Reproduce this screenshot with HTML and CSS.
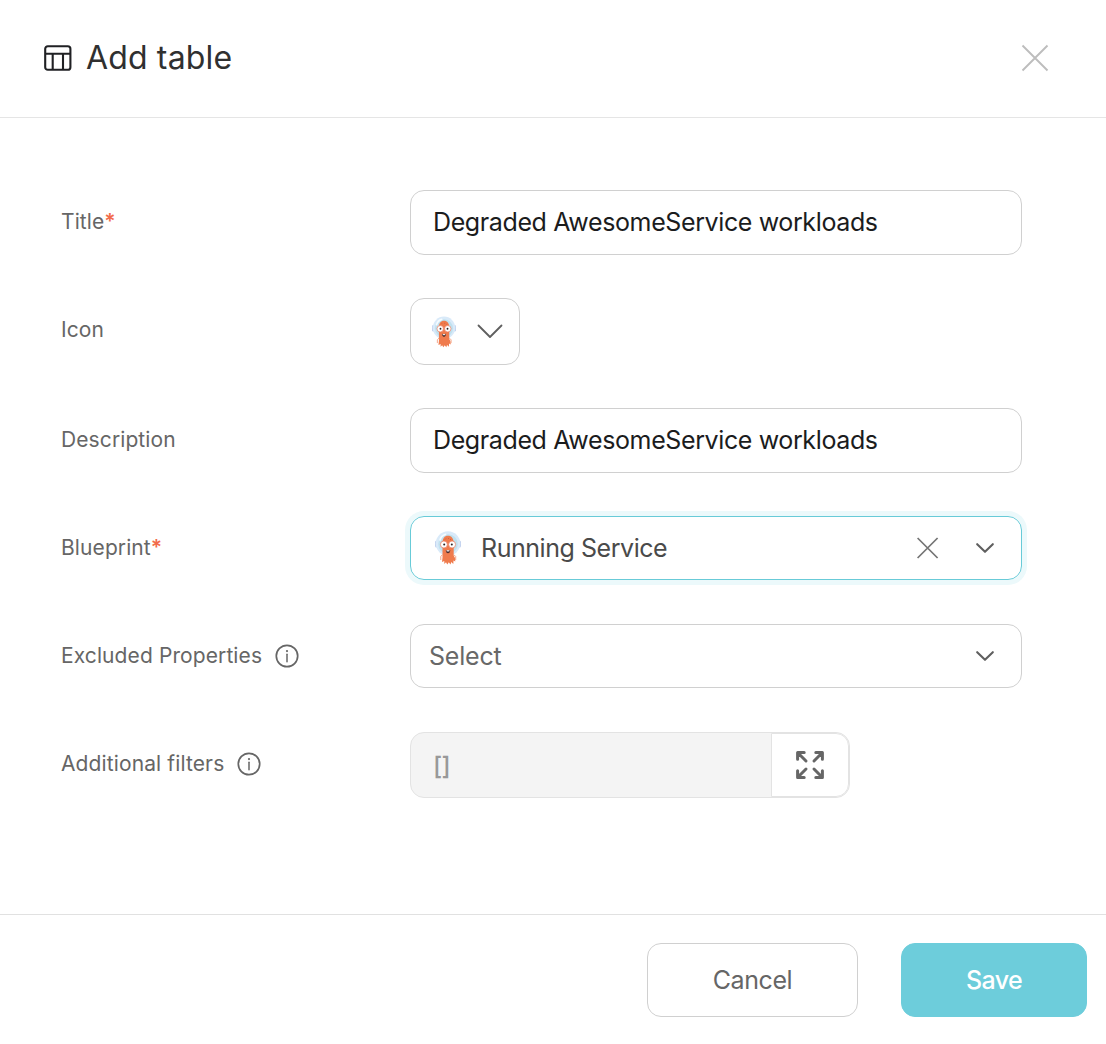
FILE: index.html
```html
<!DOCTYPE html>
<html lang="en">
<head>
<meta charset="utf-8">
<title>Add table</title>
<link rel="stylesheet" href="styles.css">
</head>
<body>
<svg class="sprite" aria-hidden="true">
  <symbol id="argo" viewBox="0 0 26 34">
    <rect x="0" y="9.500" width="3" height="7" rx="1.500" fill="#c3d2ee"/>
    <rect x="23" y="9.500" width="3" height="7" rx="1.500" fill="#c3d2ee"/>
    <circle cx="13" cy="12.500" r="12.200" fill="#d9eaf9"/>
    <circle cx="13" cy="13" r="9.800" fill="#c0e1ef"/>
    <path d="M5 9C6 5.500 8 4 10.500 3.300" fill="none" stroke="#f5fbff" stroke-width="1.800" stroke-linecap="round"/>
    <path d="M7.500 12C7.500 7.500 9.500 4.800 13 4.800S18.700 7.500 18.700 12V24.500L20 27L20.300 30.500L18.500 29.500L18.300 33L16.300 31L15.500 33.500L13.800 31.300L12.300 33.500L11 31.300L9.300 33V30L7 31L7.500 26.500Z" fill="#ef7b4d"/>
    <path d="M7.600 23.500L5.800 25.500V29M18.700 23.500L20.700 25.500V29" fill="none" stroke="#f4a485" stroke-width="1"/>
    <path d="M10 8.500L11 7.500M13 7.500H14M16 9L15 8" stroke="#d4603d" stroke-width=".9"/>
    <circle cx="8.900" cy="13.500" r="3.500" fill="#fff" stroke="#e9785a" stroke-width=".7"/>
    <circle cx="17.100" cy="13.500" r="3.500" fill="#fff" stroke="#e9785a" stroke-width=".7"/>
    <circle cx="9.200" cy="13.500" r="1" fill="#282225"/>
    <circle cx="16.800" cy="13.500" r="1" fill="#282225"/>
    <path d="M10.800 19Q13 20 15.300 19Q15 22.300 13 22.300T10.800 19Z" fill="#4d2d2d"/>
    <path d="M11.600 19.300H14.400V20.400H11.600Z" fill="#fff"/>
  </symbol>
  <symbol id="info" viewBox="0 0 24 24">
    <circle cx="12" cy="12" r="10.700" fill="none" stroke="#666" stroke-width="1.700"/>
    <path d="M12 10.300V17.800" stroke="#666" stroke-width="1.500" stroke-linecap="round"/>
    <circle cx="12" cy="7.100" r="1.100" fill="#666"/>
  </symbol>
  <symbol id="chevron" viewBox="0 0 18 10">
    <path d="M1.200 1.200L9 8.800L16.800 1.200" fill="none" stroke="#5f5f5f" stroke-width="2.100" stroke-linecap="round" stroke-linejoin="round"/>
  </symbol>
</svg>
<div class="dialog">
  <header class="header">
    <svg class="table-icon" viewBox="0 0 28 26" fill="none" stroke="#202124" stroke-width="2.100">
      <rect x="1.200" y="1.200" width="25.200" height="23.600" rx="2.600"/>
      <path d="M1.200 8.800H26.400M8.700 8.800V24.800M19 8.800V24.800"/>
    </svg>
    <h1 class="heading">Add table</h1>
    <svg class="close" viewBox="0 0 28 28" fill="none" stroke="#bdbdbd" stroke-width="1.900"><path d="M1.500 1.500L26.500 26.500M26.500 1.500L1.500 26.500"/></svg>
  </header>
  <main class="form">
    <div class="row row-title">
      <label class="label">Title<span class="star">*</span></label>
      <div class="field"><span class="value">Degraded AwesomeService workloads</span></div>
    </div>
    <div class="row row-icon">
      <label class="label">Icon</label>
      <div class="field icon-picker">
        <svg class="argo-small"><use href="#argo"/></svg>
        <svg class="chevron-wide" viewBox="0 0 26 15"><path d="M1.500 1.500L13 13L24.500 1.500" fill="none" stroke="#5f5f5f" stroke-width="1.800" stroke-linecap="round" stroke-linejoin="round"/></svg>
      </div>
    </div>
    <div class="row row-description">
      <label class="label">Description</label>
      <div class="field"><span class="value">Degraded AwesomeService workloads</span></div>
    </div>
    <div class="row row-blueprint">
      <label class="label">Blueprint<span class="star">*</span></label>
      <div class="field focused">
        <svg class="argo"><use href="#argo"/></svg>
        <span class="selected">Running Service</span>
        <svg class="clear" viewBox="0 0 22 22" fill="none" stroke="#747474" stroke-width="1.700"><path d="M.6 1L20.600 21M20.600 1L.6 21"/></svg>
        <svg class="chevron"><use href="#chevron"/></svg>
      </div>
    </div>
    <div class="row row-excluded">
      <label class="label">Excluded Properties<svg class="info"><use href="#info"/></svg></label>
      <div class="field select">
        <span class="placeholder">Select</span>
        <svg class="chevron"><use href="#chevron"/></svg>
      </div>
    </div>
    <div class="row row-filters">
      <label class="label"><span class="filters-label">Additional filters</span><svg class="info"><use href="#info"/></svg></label>
      <div class="filters">
        <div class="json">[]</div>
        <div class="expand">
          <svg class="expand-icon" viewBox="0 0 28 28" fill="none" stroke="#666" stroke-width="3" stroke-linecap="round" stroke-linejoin="round">
            <path d="M8.200 1.600H1.600V8.200M2.300 2.300L10 10"/>
            <path d="M19.800 1.600H26.400V8.200M25.700 2.300L18 10"/>
            <path d="M8.200 26.400H1.600V19.800M2.300 25.700L10 18"/>
            <path d="M19.800 26.400H26.400V19.800M25.700 25.700L18 18"/>
          </svg>
        </div>
      </div>
    </div>
  </main>
  <footer class="footer">
    <button class="button cancel">Cancel</button>
    <button class="button save">Save</button>
  </footer>
</div>
</body>
</html>
```
FILE: styles.css
```css
* { box-sizing: border-box; }
body { margin: 0; background: #fff; font-family: Inter, "Liberation Sans", sans-serif; }
.sprite { display: none; }
svg { display: block; flex: none; }
.dialog { display: flex; flex-direction: column; width: 1106px; height: 1044px; overflow: hidden; }
.header { display: flex; align-items: center; height: 118px; padding: 0 57px 1px 44px; border-bottom: 1px solid #e5e5e5; }
.table-icon { width: 28px; height: 26px; }
.heading { margin: 0 0 0 14px; font-size: 32px; line-height: 40px; font-weight: 400; letter-spacing: .15px; color: #303030; white-space: nowrap; }
.close { width: 28px; height: 28px; margin-left: auto; }
.form { display: flex; flex-direction: column; flex: 1; padding: 72px 84px 0 61px; }
.row { display: grid; grid-template-columns: 349px 612px; margin-bottom: 43px; }
.row-title, .row-description { height: 65px; }
.row-icon { height: 67px; }
.row-blueprint, .row-excluded { height: 64px; margin-bottom: 44px; }
.row-filters { height: 66px; margin-bottom: 0; }
.label { display: flex; align-items: center; padding-bottom: 1px; font-size: 21px; line-height: 30px; letter-spacing: .1px; color: #666; white-space: nowrap; }
.row-icon .label { padding-bottom: 3px; }
.row-filters .label { padding-bottom: 3px; }
.filters-label { letter-spacing: .12px; }
.star { color: #f26b4b; font-weight: 600; font-size: 21px; letter-spacing: 0; }
.info { width: 24px; height: 24px; margin: 1px 0 0 12.5px; }
.field { display: flex; align-items: center; border: 1px solid #d0d0d0; border-radius: 14px; padding: 0 27px 0 22px; white-space: nowrap; }
.value { padding-bottom: 1px; font-size: 25px; line-height: 34px; letter-spacing: -.38px; color: #1b1c1d; }
.icon-picker { width: 110px; padding: 0 16px 0 21px; justify-content: space-between; }
.argo-small { width: 24px; height: 32px; }
.chevron-wide { width: 26px; height: 15px; }
.focused { border-color: #68cbd8; box-shadow: 0 0 0 5px #ecf9fb; padding-left: 24px; }
.argo { width: 26px; height: 34px; }
.selected { margin-left: 20px; padding-bottom: 1px; font-size: 25px; line-height: 34px; letter-spacing: -.45px; color: #4a4a4a; }
.clear { width: 22px; height: 22px; margin-left: auto; }
.clear + .chevron { margin-left: 37px; }
.chevron { width: 18px; height: 10px; }
.select { justify-content: space-between; padding-left: 18px; }
.placeholder { padding-bottom: 1px; font-size: 25px; line-height: 34px; letter-spacing: -.2px; color: #686868; }
.filters { display: flex; width: 440px; height: 66px; border: 1px solid #e3e3e3; border-radius: 14px; background: #f4f4f4; overflow: hidden; }
.json { display: flex; align-items: center; flex: 1; padding: 1px 0 0 22px; font-size: 25px; font-weight: 500; letter-spacing: -.8px; color: #999; }
.expand { display: flex; align-items: center; justify-content: center; width: 78px; border: 1px solid #e3e3e3; border-radius: 0 13px 13px 0; background: #fff; }
.expand-icon { width: 28px; height: 28px; }
.footer { display: flex; justify-content: flex-end; gap: 43px; height: 130px; padding: 28px 19px 0 0; border-top: 1px solid #e1e1e1; }
.button { height: 74px; padding: 0 0 1px; border: 1px solid #d0d0d0; border-radius: 14px; background: #fff; color: #666; font: 400 25px/34px Inter, "Liberation Sans", sans-serif; letter-spacing: -.42px; }
.cancel { width: 211px; }
.save { width: 186px; border-color: #6dcddb; background: #6dcddb; color: #fff; font-weight: 500; letter-spacing: -.65px; }
```
